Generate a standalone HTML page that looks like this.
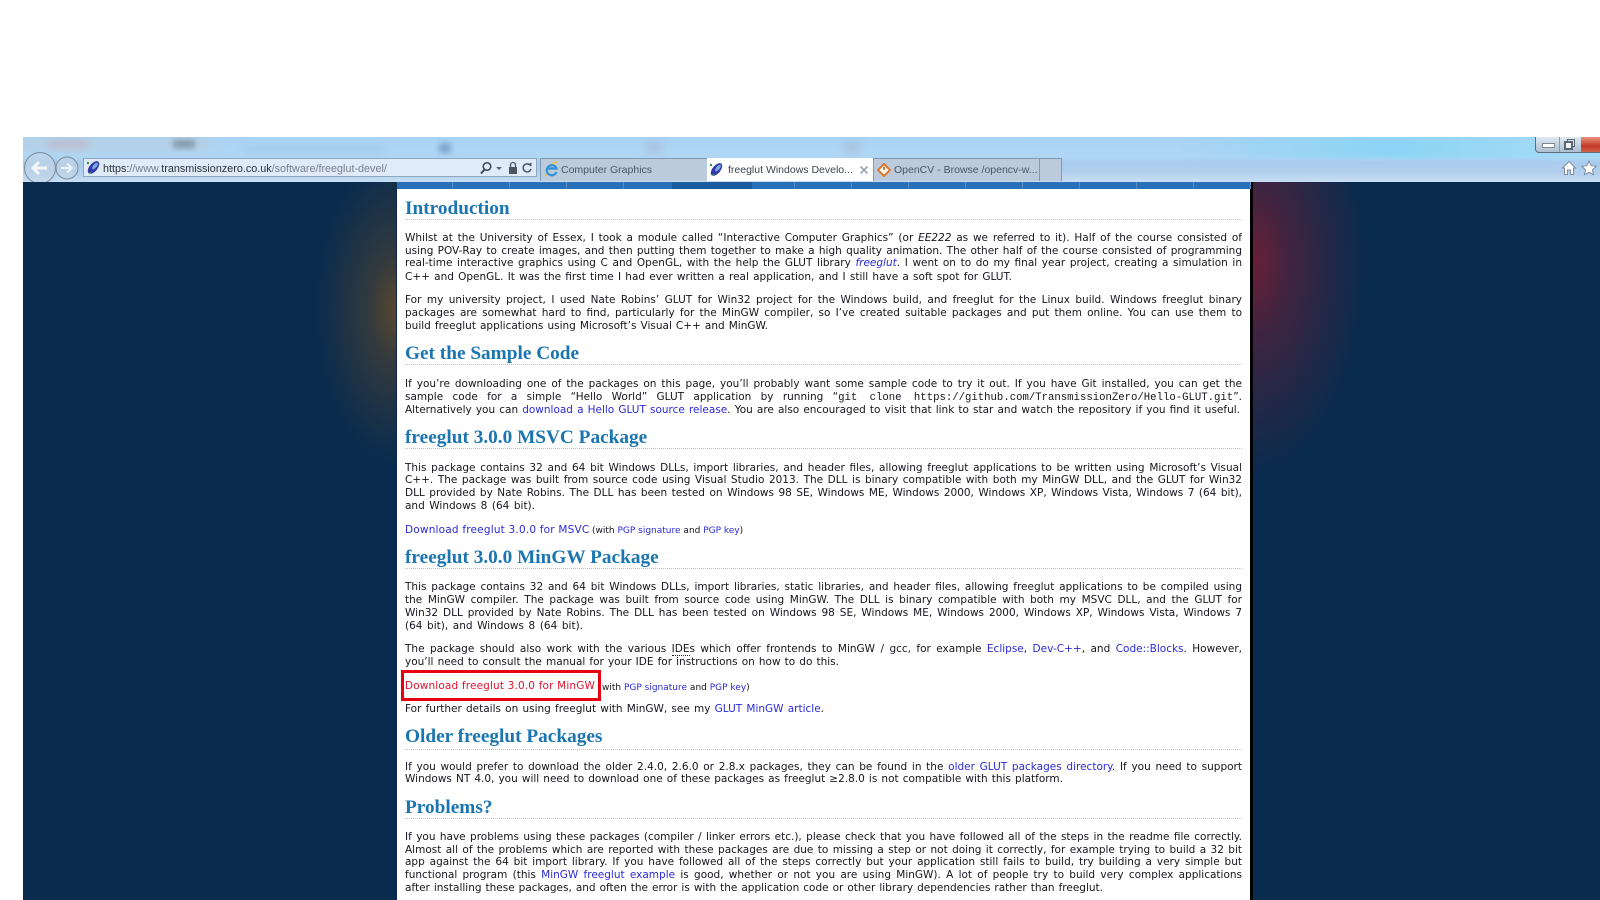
<!DOCTYPE html>
<html><head><meta charset="utf-8"><title>freeglut Windows Development Libraries</title>
<style>
html,body{margin:0;padding:0;background:#fff;width:1600px;height:900px;overflow:hidden}
#stage{position:absolute;left:0;top:0;width:1600px;height:900px;overflow:hidden;background:#fff}
.abs{position:absolute}
#bg{position:absolute;left:23px;top:182px;width:1577px;height:718px;background:#082b4e;overflow:hidden}
#page{position:absolute;left:397px;top:182px;width:853px;height:718px;background:#fff}
.l,.s,.h{position:absolute;white-space:nowrap;font-family:"DejaVu Sans",sans-serif;color:#15151f;filter:blur(.25px)}
.l{left:405px;width:837px;height:13px;line-height:13px;font-size:10.5px;text-align:justify;text-align-last:justify}
.s{height:13px;line-height:13px;font-size:9px}
.h{left:405px;font-family:"Liberation Serif",serif;font-weight:bold;font-size:19.3px;line-height:22px;height:22px;color:#1b75b0;filter:blur(.3px)}
.r{position:absolute;left:405px;width:837px;border-top:1px dotted #a8c8dc}
a{color:#2a2ad8;text-decoration:none}
code{font-family:"Liberation Mono",monospace;font-size:10.65px}
abbr{text-decoration:none;border-bottom:1px dotted #222}
.t{position:absolute;font-family:"Liberation Sans",sans-serif;font-size:10.5px;white-space:nowrap;filter:blur(.35px)}
.ic{filter:blur(.35px)}
</style></head><body><div id="stage">

<!-- browser chrome -->
<div class="abs" style="left:23px;top:137px;width:1577px;height:45px;background:linear-gradient(#a9d3f4 0,#b0d6f5 20px,#a9cbec 26px,#b2d0ee 36px,#c8dff3 45px);overflow:hidden">
  <div class="abs" style="right:0;top:0;width:420px;height:21px;background:linear-gradient(90deg,rgba(136,212,245,0),#8bd4f5 50%,#a8dcf6);filter:blur(2px)"></div>
  <div class="abs" style="left:0;top:0;width:190px;height:14px;background:#b9cfe0;filter:blur(5px);opacity:.7"></div>
  <div class="abs" style="left:25px;top:3px;width:40px;height:8px;background:#c9a9b5;filter:blur(4px);opacity:.55"></div>
  <div class="abs" style="left:150px;top:3px;width:22px;height:8px;background:#5d6670;filter:blur(3px);opacity:.55"></div>
  <div class="abs" style="left:416px;top:6px;width:12px;height:10px;background:#5f84b8;filter:blur(3px);opacity:.6"></div>
  <div class="abs" style="left:220px;top:9px;width:140px;height:6px;background:#8fb0cc;filter:blur(4px);opacity:.35"></div>
  <div class="abs" style="left:622px;top:4px;width:18px;height:12px;background:#a5b7cf;filter:blur(4px);opacity:.5"></div>
  <div class="abs" style="left:820px;top:4px;width:18px;height:12px;background:#a5b7cf;filter:blur(4px);opacity:.5"></div>
</div>

<!-- window controls -->
<div class="abs" style="left:1535px;top:137px;width:65px;height:16px;border-left:1px solid #5d6d80;border-bottom:1px solid #5d6d80;border-bottom-left-radius:4px;box-sizing:border-box;background:linear-gradient(#dfe9f2,#aebfd0);overflow:hidden;filter:blur(.3px)">
  <div class="abs" style="left:23px;top:0;width:1px;height:15px;background:#8a9aac"></div>
  <div class="abs" style="left:45px;top:0;width:20px;height:15px;background:linear-gradient(#e89080,#c23a25 60%,#d0604a)"></div>
  <div class="abs" style="left:6px;top:6px;width:11px;height:3px;background:#fff;border:1px solid #7d8b9a"></div>
  <div class="abs" style="left:31px;top:2px;width:6px;height:6px;border:1px solid #5a6672;background:#dbe5ee"></div>
  <div class="abs" style="left:28px;top:4px;width:5px;height:5px;border:2px solid #5a6672;background:#eef3f8"></div>
</div>

<!-- nav buttons -->
<svg class="abs ic" style="left:22px;top:148px" width="62" height="36" viewBox="0 0 62 36">
  <circle cx="18" cy="20" r="15.5" fill="#c4d3e2" fill-opacity=".55" stroke="#7c8c9f" stroke-width="1"/>
  <path d="M25 20H12M17 14l-6 6 6 6" fill="none" stroke="#f4f7fa" stroke-width="3" stroke-linejoin="round"/>
  <circle cx="45" cy="20" r="11" fill="#c4d3e2" fill-opacity=".55" stroke="#7c8c9f" stroke-width="1"/>
  <path d="M39 20h10M45 15.500l5 4.500-5 4.500" fill="none" stroke="#eef4fa" stroke-width="2" stroke-linejoin="round"/>
</svg>

<!-- address bar -->
<div class="abs" style="left:83px;top:158px;width:454px;height:19px;box-sizing:border-box;background:#dfebf8;border:1px solid #8ea6bf"></div>
<svg class="abs ic" style="left:86px;top:160px" width="15" height="15" viewBox="0 0 15 15">
  <ellipse cx="7.500" cy="7.500" rx="7.500" ry="4" transform="rotate(-50 7.500 7.500)" fill="#3339a8"/>
  <ellipse cx="9" cy="6" rx="4" ry="1.800" transform="rotate(-50 9 6)" fill="#7aa8e0"/>
  <path d="M2 13l3-1 1 2z" fill="#3c9a48"/><circle cx="2" cy="3" r="1.200" fill="#2f8f3f"/>
</svg>
<div class="t" style="left:103px;top:162px;height:14px;line-height:14px;font-size:10.8px;color:#777f8a">
  <span style="color:#2a313b">https:</span>//www.<span style="color:#2a313b">transmissionzero.co.uk</span>/software/freeglut-devel/</div>
<svg class="abs ic" style="left:477px;top:160px" width="58" height="16" viewBox="0 0 58 16">
  <circle cx="10" cy="6.500" r="3.800" fill="none" stroke="#3d4650" stroke-width="1.500"/>
  <path d="M7.500 9.500L4 13.500" stroke="#3d4650" stroke-width="2"/>
  <path d="M19 7h6l-3 3z" fill="#5c6670"/>
  <rect x="32" y="7" width="8" height="7" fill="#4c5560"/><path d="M33.500 7V5a2.500 2.500 0 0 1 5 0v2" fill="none" stroke="#4c5560" stroke-width="1.300"/>
  <path d="M53 5a4 4 0 1 0 1 4" fill="none" stroke="#4c5560" stroke-width="1.500"/><path d="M50.500 4.500l4-2v4z" fill="#4c5560"/>
</svg>

<!-- tabs -->
<div class="abs" style="left:540px;top:158px;width:168px;height:23px;box-sizing:border-box;background:#bccbdb;border:1px solid #7f9ab5;border-bottom:0"></div>
<div class="abs" style="left:707px;top:158px;width:166px;height:23px;background:#fff"></div>
<div class="abs" style="left:873px;top:158px;width:167px;height:23px;box-sizing:border-box;background:#bccbdb;border:1px solid #7f9ab5;border-bottom:0"></div>
<div class="abs" style="left:1039px;top:158px;width:23px;height:23px;box-sizing:border-box;background:#bccbdb;border:1px solid #7f9ab5;border-bottom:0"></div>
<svg class="abs ic" style="left:544px;top:161px" width="15" height="16" viewBox="0 0 15 16">
  <path d="M2.500 15C-1 11 6 1.500 14 1" fill="none" stroke="#eac040" stroke-width="1.400"/>
  <path d="M12.500 11A5 5 0 1 1 12.500 7.500H3.500" fill="none" stroke="#2f93dc" stroke-width="2.200"/>
</svg>
<div class="t" style="left:561px;top:163px;height:14px;line-height:14px;color:#4a5562">Computer Graphics</div>
<svg class="abs ic" style="left:709px;top:162px" width="15" height="15" viewBox="0 0 15 15">
  <ellipse cx="7.500" cy="7.500" rx="7.500" ry="4" transform="rotate(-50 7.500 7.500)" fill="#3339a8"/>
  <ellipse cx="9" cy="6" rx="4" ry="1.800" transform="rotate(-50 9 6)" fill="#7aa8e0"/>
  <path d="M2 13l3-1 1 2z" fill="#3c9a48"/><circle cx="2" cy="3" r="1.200" fill="#2f8f3f"/>
</svg>
<div class="t" style="left:728px;top:163px;height:14px;line-height:14px;color:#3c444e">freeglut Windows Develo...</div>
<svg class="abs ic" style="left:859px;top:165px" width="10" height="10" viewBox="0 0 10 10"><path d="M1.500 1.500l7 7M8.500 1.500l-7 7" stroke="#9aa4ae" stroke-width="1.600"/></svg>
<svg class="abs ic" style="left:877px;top:163px" width="14" height="14" viewBox="0 0 14 14">
  <path d="M7 1l6 6-6 6-6-6z" fill="#fff" stroke="#e2762a" stroke-width="2"/><path d="M7 4v3" stroke="#e2762a" stroke-width="2"/>
</svg>
<div class="t" style="left:894px;top:163px;height:14px;line-height:14px;color:#4a5562">OpenCV - Browse /opencv-w...</div>

<!-- home and star -->
<svg class="abs ic" style="left:1561px;top:160px" width="39" height="16" viewBox="0 0 39 16">
  <path d="M8 1.500L1.500 8H3.500v6.500H6.500V10H9.500v4.500H12.500V8H14.500z" fill="#fff" stroke="#7f8d9c" stroke-width="1"/>
  <path d="M28 1l2.200 4.700 5 .6-3.700 3.400 1 5L28 12.300 23.500 14.700l1-5L20.800 6.300l5-.6z" fill="#fff" stroke="#7f8d9c" stroke-width="1"/>
</svg>

<!-- page background -->
<div id="bg">
  <div class="abs" style="left:292px;top:-27px;width:164px;height:310px;background:radial-gradient(ellipse 50% 50% at 50% 50%,#5a482e 0,rgba(85,70,48,.55) 35%,rgba(8,43,78,0) 100%)"></div>
  <div class="abs" style="left:1114px;top:-135px;width:230px;height:430px;background:radial-gradient(ellipse 50% 50% at 50% 50%,#6a1f36 0,rgba(106,31,54,.55) 35%,rgba(8,43,78,0) 100%)"></div>
</div>
<div class="abs" style="left:396px;top:188px;width:1px;height:712px;background:#0a2350"></div>
<div class="abs" style="left:1250px;top:182px;width:3px;height:718px;background:#000"></div>
<div id="page"></div>
<div class="abs" style="left:397px;top:182px;width:853px;height:7px;background:#2a70b8"></div>
<div class="abs" style="left:396px;top:182px;width:856px;height:7px;background:repeating-linear-gradient(90deg,transparent 0,transparent 56px,#5a8cc6 56px,#5a8cc6 57px)"></div>
<div class="abs" style="left:672px;top:182px;width:80px;height:7px;background:#1b5c9e"></div>

<!-- content -->
<div class="h" style="top:198px">Introduction</div><div class="r" style="top:219px"></div>
<div class="l" style="top:232px">Whilst at the University of Essex, I took a module called “Interactive Computer Graphics” (or <i>EE222</i> as we referred to it). Half of the course consisted of</div>
<div class="l" style="top:245px">using POV-Ray to create images, and then putting them together to make a high quality animation. The other half of the course consisted of programming</div>
<div class="l" style="top:257px">real-time interactive graphics using C and OpenGL, with the help the GLUT library <a href="#"><i>freeglut</i></a>. I went on to do my final year project, creating a simulation in</div>
<div class="l" style="top:271px;width:607px">C++ and OpenGL. It was the first time I had ever written a real application, and I still have a soft spot for GLUT.</div>
<div class="l" style="top:294px">For my university project, I used Nate Robins’ GLUT for Win32 project for the Windows build, and freeglut for the Linux build. Windows freeglut binary</div>
<div class="l" style="top:307px">packages are somewhat hard to find, particularly for the MinGW compiler, so I’ve created suitable packages and put them online. You can use them to</div>
<div class="l" style="top:320px;width:363px">build freeglut applications using Microsoft’s Visual C++ and MinGW.</div>

<div class="h" style="top:343px">Get the Sample Code</div><div class="r" style="top:364px"></div>
<div class="l" style="top:378px">If you’re downloading one of the packages on this page, you’ll probably want some sample code to try it out. If you have Git installed, you can get the</div>
<div class="l" style="top:391px">sample code for a simple “Hello World” GLUT application by running “<code>git clone https://github.com/TransmissionZero/Hello-GLUT.git</code>”.</div>
<div class="l" style="top:404px;width:835px">Alternatively you can <a href="#">download a Hello GLUT source release</a>. You are also encouraged to visit that link to star and watch the repository if you find it useful.</div>

<div class="h" style="top:427px">freeglut 3.0.0 MSVC Package</div><div class="r" style="top:448px"></div>
<div class="l" style="top:462px">This package contains 32 and 64 bit Windows DLLs, import libraries, and header files, allowing freeglut applications to be written using Microsoft’s Visual</div>
<div class="l" style="top:474px">C++. The package was built from source code using Visual Studio 2013. The DLL is binary compatible with both my MinGW DLL, and the GLUT for Win32</div>
<div class="l" style="top:487px">DLL provided by Nate Robins. The DLL has been tested on Windows 98 SE, Windows ME, Windows 2000, Windows XP, Windows Vista, Windows 7 (64 bit),</div>
<div class="l" style="top:500px;width:130px">and Windows 8 (64 bit).</div>
<div class="l" style="top:524px;width:184px;letter-spacing:.2px"><a href="#">Download freeglut 3.0.0 for MSVC</a></div>
<div class="s" style="left:592px;top:525px">(with <a href="#">PGP signature</a> and <a href="#">PGP key</a>)</div>

<div class="h" style="top:547px">freeglut 3.0.0 MinGW Package</div><div class="r" style="top:568px"></div>
<div class="l" style="top:581px">This package contains 32 and 64 bit Windows DLLs, import libraries, static libraries, and header files, allowing freeglut applications to be compiled using</div>
<div class="l" style="top:594px">the MinGW compiler. The package was built from source code using MinGW. The DLL is binary compatible with both my MSVC DLL, and the GLUT for</div>
<div class="l" style="top:607px">Win32 DLL provided by Nate Robins. The DLL has been tested on Windows 98 SE, Windows ME, Windows 2000, Windows XP, Windows Vista, Windows 7</div>
<div class="l" style="top:620px;width:178px">(64 bit), and Windows 8 (64 bit).</div>
<div class="l" style="top:643px">The package should also work with the various <abbr>IDE</abbr>s which offer frontends to MinGW / gcc, for example <a href="#">Eclipse</a>, <a href="#">Dev-C++</a>, and <a href="#">Code::Blocks</a>. However,</div>
<div class="l" style="top:656px;width:434px">you’ll need to consult the manual for your IDE for instructions on how to do this.</div>
<div class="abs" style="left:401px;top:670px;width:200px;height:31px;box-sizing:border-box;border:3px solid #e60012"></div>
<div class="l" style="top:680px;width:190px;color:#e0142c;letter-spacing:.14px">Download freeglut 3.0.0 for MinGW</div>
<div class="s" style="left:602px;top:682px;color:#111">with <a href="#">PGP signature</a> and <a href="#">PGP key</a>)</div>
<div class="l" style="top:703px;width:419px">For further details on using freeglut with MinGW, see my <a href="#">GLUT MinGW article</a>.</div>

<div class="h" style="top:726px">Older freeglut Packages</div><div class="r" style="top:749px"></div>
<div class="l" style="top:761px">If you would prefer to download the older 2.4.0, 2.6.0 or 2.8.x packages, they can be found in the <a href="#">older GLUT packages directory</a>. If you need to support</div>
<div class="l" style="top:773px;width:658px">Windows NT 4.0, you will need to download one of these packages as freeglut ≥2.8.0 is not compatible with this platform.</div>

<div class="h" style="top:797px">Problems?</div><div class="r" style="top:818px"></div>
<div class="l" style="top:831px">If you have problems using these packages (compiler / linker errors etc.), please check that you have followed all of the steps in the readme file correctly.</div>
<div class="l" style="top:844px">Almost all of the problems which are reported with these packages are due to missing a step or not doing it correctly, for example trying to build a 32 bit</div>
<div class="l" style="top:856px">app against the 64 bit import library. If you have followed all of the steps correctly but your application still fails to build, try building a very simple but</div>
<div class="l" style="top:869px">functional program (this <a href="#">MinGW freeglut example</a> is good, whether or not you are using MinGW). A lot of people try to build very complex applications</div>
<div class="l" style="top:882px;width:698px">after installing these packages, and often the error is with the application code or other library dependencies rather than freeglut.</div>

</div></body></html>
